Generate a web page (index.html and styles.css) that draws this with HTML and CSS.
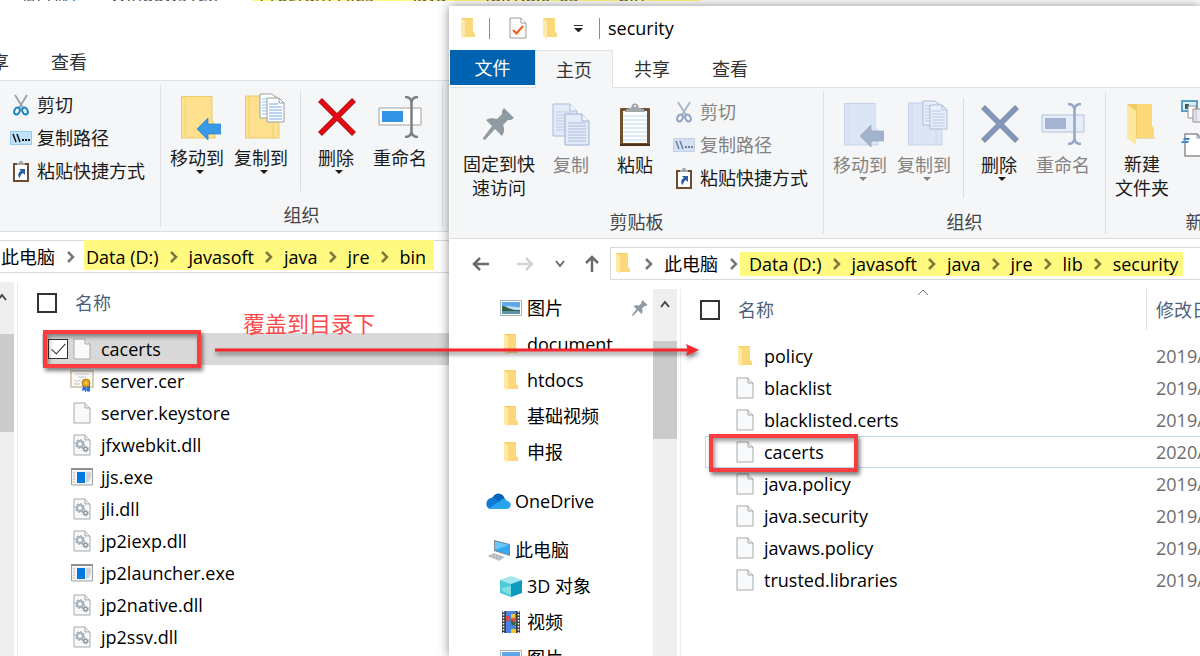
FILE: index.html
```html
<!DOCTYPE html>
<html lang="zh-CN">

<head>
    <meta charset="UTF-8">
    <meta name="viewport" content="width=device-width, initial-scale=1.0">
    <title>security</title>
    <link rel="stylesheet" href="styles.css">
</head>

<body>
    <!-- icon set -->
    <svg class="sprite" aria-hidden="true">
        <symbol id="folder" viewBox="0 0 16 21">
            <path d="M1 0H13V14L15 16V19H5L1 18Z" fill="#f5cf68" />
            <path d="M5 1H13V14L15 16V19H5Z" fill="#f9d97c" />
            <path d="M1 0L5 3V21L1 18Z" fill="#ffe9a8" />
        </symbol>
        <symbol id="folder-big" viewBox="0 0 30 42">
            <path d="M0 1H25V23L27 26V35H8L0 32Z" fill="#f3cb62" />
            <path d="M10 1H25V23L27 26V35H10Z" fill="#fbd978" />
            <path d="M0 1L9 8V42L0 35Z" fill="#ffe79d" />
            <path d="M27 35H30L27 36H9V35Z" fill="#e6dcc0" />
        </symbol>
        <symbol id="page" viewBox="0 0 18 22">
            <path d="M1 1H12L17 6V21H1Z" fill="#f8f9fa" stroke="#a5a9ab" />
            <path d="M12 1V6H17" fill="#e9ecee" stroke="#a5a9ab" />
        </symbol>
        <symbol id="dll" viewBox="0 0 18 22">
            <path d="M1 1H12L17 6V21H1Z" fill="#f8f9fa" stroke="#a5a9ab" />
            <path d="M12 1V6H17" fill="#e9ecee" stroke="#a5a9ab" />
            <circle cx="7" cy="10" r="3" fill="none" stroke="#a3b1bc" stroke-width="2" />
            <circle cx="7" cy="10" r="4" fill="none" stroke="#a3b1bc" stroke-width="2" stroke-dasharray="1.6 1.5" />
            <circle cx="12.500" cy="15" r="1.800" fill="none" stroke="#8e9ca8" stroke-width="1.500" />
            <circle cx="12.500" cy="15" r="2.800" fill="none" stroke="#8e9ca8" stroke-width="1" stroke-dasharray="1.200 1" />
        </symbol>
        <symbol id="exe" viewBox="0 0 22 18">
            <path d="M0.500 0.500H21.500V17H0.500Z" fill="#f3f4f5" stroke="#9da1a4" />
            <path d="M0 1H22" stroke="#8d9194" stroke-width="2" />
            <path d="M6 4H14V15H6Z" fill="#0078dc" />
            <path d="M2 5H4M2 8H4M2 11H4M2 14H4M15 5H20M15 7H20M15 9H20M15 11H19M15 13H18" stroke="#afb4b8" />
        </symbol>
        <symbol id="cert" viewBox="0 0 24 22">
            <path d="M1 1H23V17H1Z" fill="#fbfaf5" stroke="#d7cdb9" stroke-width="2" />
            <path d="M5 4H19M8 7H16" stroke="#bfccd9" />
            <path d="M4 11C6 9 6 13 8 11S10 12 11 11M4 14H10" fill="none" stroke="#b7bbc0" />
            <path d="M13 15L12 21L15 20V22H16V15ZM17 15L16 20L18 22L20 21V15Z" fill="#2a6fe0" />
            <circle cx="16" cy="13" r="4" fill="#e0a11c" stroke="#b97c0c" />
            <circle cx="16" cy="13" r="1.500" fill="#f7d56c" />
        </symbol>
        <symbol id="task" viewBox="0 0 18 22">
            <path d="M1 1H12L17 6V21H1Z" fill="#fafbfc" stroke="#9b9b9b" />
            <path d="M12 1V6H17" fill="#fff" stroke="#9b9b9b" />
            <path d="M4 13L7.500 16.500L14 9" fill="none" stroke="#f4591c" stroke-width="2" />
        </symbol>
        <symbol id="pin" viewBox="0 0 32 32">
            <path d="M21 0L31 10L28 12L25 12L20 17C22 21 21 25 19 28L12 21L2 32L0 31L0 30L9 18L3 12C6 10 10 10 14 11L19 6V3Z" fill="#8f9ba2" />
        </symbol>
        <symbol id="copy" viewBox="0 0 38 43">
            <path d="M1 1H18L25 8V33H1Z" fill="#e3ebf8" stroke="#a9bbd9" />
            <path d="M18 1V8H25" fill="#f4f7fc" stroke="#a9bbd9" />
            <path d="M4 9H21M4 12H21M4 15H21M4 18H21M4 21H21M4 24H21M4 27H21" stroke="#bccbe4" />
            <path d="M13 11H30L37 18V42H13Z" fill="#e3ebf8" stroke="#9db1d3" />
            <path d="M30 11V18H37" fill="#f4f7fc" stroke="#9db1d3" />
            <path d="M16 20H34M16 23H34M16 26H34M16 29H34M16 32H34M16 35H34M16 38H34" stroke="#a9bbd9" />
        </symbol>
        <symbol id="paste" viewBox="0 0 32 44">
            <rect x="1" y="5" width="30" height="38" rx="1" fill="#744d2a" />
            <path d="M1 42H31" stroke="#4b2f18" stroke-width="2" />
            <path d="M4 8H28V40H4Z" fill="#fbfdfe" />
            <path d="M4 13H28M4 17H28M4 21H28M4 25H28M4 29H28M4 33H28M4 37H28" stroke="#bfdced" />
            <path d="M6 9C6 6 9 5 12 5L13 2C14 0 18 0 19 2L20 5C23 5 26 6 26 9Z" fill="#a4a6a7" />
            <circle cx="16" cy="3" r="1" fill="#fff" />
        </symbol>
        <symbol id="cut" viewBox="0 0 16 22">
            <path d="M2 1L10 14M14 1L6 14" fill="none" stroke="var(--blade, #9aa0a5)" stroke-width="1.800" />
            <ellipse cx="4" cy="17" rx="2.600" ry="3.600" transform="rotate(25 4 17)" fill="none" stroke="var(--handle, #1c84c4)" stroke-width="2" />
            <ellipse cx="12" cy="17" rx="2.600" ry="3.600" transform="rotate(-25 12 17)" fill="none" stroke="var(--handle, #1c84c4)" stroke-width="2" />
        </symbol>
        <symbol id="path" viewBox="0 0 22 14">
            <path d="M0.500 0.500H21.500V13.500H0.500Z" fill="var(--path-bg, #bfe3fb)" stroke="var(--path-line, #9ac8e8)" />
            <path d="M3 3L6 11M7 3L10 11" stroke="var(--path-ink, #111)" stroke-width="1.500" />
            <path d="M12 9H14M15 9H17M18 9H20" stroke="var(--path-ink, #111)" stroke-width="2" />
        </symbol>
        <symbol id="shortcut" viewBox="0 0 16 22">
            <path d="M1 4H15V21H1Z" fill="#fff" stroke="#6d4c33" stroke-width="2" />
            <path d="M4 5V3H6C6 0 10 0 10 3H12V5Z" fill="#a5a8ab" />
            <path d="M6 9H12V15L10 13C8 14 7 16 7 18C4 16 5 12 8 11Z" fill="#2b5c9f" />
        </symbol>
        <symbol id="move-to" viewBox="0 0 40 44">
            <path d="M0.500 0.500H31V25L34 28V42H0.500Z" fill="var(--fold, #fde18e)" stroke="var(--fold-line, #ecc869)" />
            <path d="M4 1V42" stroke="var(--fold-line, #ecc869)" opacity="0.500" />
            <path d="M16 33L27 22V28H40V38H27V44Z" fill="var(--arrow, #3a98e8)" stroke="var(--arrow-line, #2c80c9)" stroke-width="0.700" />
        </symbol>
        <symbol id="copy-to" viewBox="0 0 40 46">
            <path d="M0.500 3H31V27L34 31V45H0.500Z" fill="var(--fold, #fde18e)" stroke="var(--fold-line, #ecc869)" />
            <path d="M28 28V45M4 3V45" stroke="var(--fold-line, #ecc869)" opacity="0.700" />
            <path d="M15 1H27L32 6V25H15Z" fill="var(--sheet, #fff)" stroke="var(--sheet-line, #9a9fa5)" />
            <path d="M17 6H28M17 9H28M17 12H28M17 15H28M17 18H28M17 21H28" stroke="var(--rule, #93bdf0)" />
            <path d="M22 5H34L39 10V29H22Z" fill="var(--sheet, #fff)" stroke="var(--sheet-line, #9a9fa5)" />
            <path d="M34 5V10H39" fill="none" stroke="var(--sheet-line, #9a9fa5)" />
            <path d="M24 11H33M24 14H37M24 17H37M24 20H37M24 23H37M24 26H37" stroke="var(--rule, #74a9ee)" />
        </symbol>
        <symbol id="delete" viewBox="0 0 38 38">
            <path d="M2 2L36 36M36 2L2 36" stroke="var(--x-line, #a80d14)" stroke-width="5.500" />
            <path d="M2.600 2.600L35.400 35.400M35.400 2.600L2.600 35.400" stroke="var(--x, #e60a14)" stroke-width="4" />
        </symbol>
        <symbol id="rename" viewBox="0 0 44 42">
            <path d="M1 12H43V29H1Z" fill="var(--box, #fff)" stroke="var(--box-line, #9da1a5)" />
            <path d="M4 15H25V26H4Z" fill="var(--fill, #3394e6)" />
            <path d="M27 1C31 1 33 3 33.500 6C34 3 36 1 40 1M33.500 6V36M27 41C31 41 33 39 33.500 36C34 39 36 41 40 41" fill="none" stroke="var(--beam, #7b7f83)" stroke-width="2.500" />
        </symbol>
        <symbol id="new-item" viewBox="0 0 26 24">
            <path d="M1 1H16V11H1Z" fill="#d7effa" stroke="#5aa0c8" stroke-width="2" />
            <path d="M4 4H8V9H4Z" fill="#355f51" />
            <path d="M7 6H15V18H7Z" fill="#fff" stroke="#8c8f92" />
            <path d="M12 9H25V22H12Z" fill="#e3f0fb" stroke="#8c8f92" />
            <path d="M15 9V22" stroke="#e8a0a0" />
        </symbol>
        <symbol id="easy-access" viewBox="0 0 22 24">
            <path d="M4 1H16L20 5V23H4Z" fill="#fff" stroke="#8c8f92" stroke-width="1.500" />
            <path d="M16 1V5H20" fill="none" stroke="#8c8f92" />
            <path d="M3 5H9L8 7H2ZM1 8H8L7 10H0Z" fill="#3f8ec9" />
        </symbol>
        <symbol id="picture" viewBox="0 0 22 16">
            <path d="M0.500 0.500H21.500V15.500H0.500Z" fill="#fff" stroke="#a8b1ba" />
            <path d="M2 2H20V9H2Z" fill="#5fa9ea" />
            <path d="M2 7C8 5 14 8 20 7V11H2Z" fill="#c4e2f5" />
            <path d="M2 6C6 6 9 9 15 10H20V11H2Z" fill="#355f4b" />
            <path d="M2 11H20V14H2Z" fill="#5d93a8" />
        </symbol>
        <symbol id="onedrive" viewBox="0 0 25 16">
            <path d="M7 4C9 0 15 -1 18 4L19 6L12 10L3 7Z" fill="#0a64bb" />
            <path d="M5 5C9 4 11 7 14 9L4 16C-1 15 -1 6 5 5Z" fill="#0f79d4" />
            <path d="M14 8C16 5 20 5 21 8C27 9 25 16 21 16H4L3 15Z" fill="#28a4ec" />
        </symbol>
        <symbol id="pc" viewBox="0 0 24 21">
            <path d="M7 0L23 4V16L7 11Z" fill="#7c8b98" />
            <path d="M8 1.500L22 5V14.500L8 10Z" fill="#35a9f3" />
            <path d="M8 1.500L22 5L8 10Z" fill="#6cc6fa" />
            <path d="M0 16L7 13L18 17L12 21Z" fill="#c8ced3" />
            <path d="M3 16L14 19.500M6 14.500L16 18" stroke="#929ba3" stroke-dasharray="2 1" />
        </symbol>
        <symbol id="cube" viewBox="0 0 22 21">
            <path d="M0 4L11 0L22 4L11 8Z" fill="#a2e7ee" />
            <path d="M0 4L11 8V21L0 17Z" fill="#4ecbd8" />
            <path d="M22 4L11 8V21L22 17Z" fill="#0c9bc0" />
            <path d="M2 12L11 10V19L2 15Z" fill="#b4f0f3" opacity="0.500" />
        </symbol>
        <symbol id="video" viewBox="0 0 18 22">
            <path d="M0 0H18V22H0Z" fill="#3e3f45" />
            <path d="M4 0H14V22H4Z" fill="#4b84df" />
            <path d="M1.500 0V22M16.500 0V22" stroke="#fff" stroke-width="1.500" stroke-dasharray="1.500 1.500" />
            <path d="M4 5H8V10H4ZM10 7H13V12H10Z" fill="#d84d4c" />
            <path d="M9 3H13V7H9ZM9 18H14V22H9Z" fill="#f2c528" />
            <path d="M8 9L13 11V14H10Z" fill="#35663d" />
        </symbol>
        <symbol id="chevron" viewBox="0 0 8 12">
            <path d="M1 1L6 6L1 11" fill="none" stroke="currentColor" stroke-width="2.500" />
        </symbol>
        <symbol id="caret-up" viewBox="0 0 10 8">
            <path d="M1 7L5 2L9 7" fill="none" stroke="currentColor" stroke-width="2" />
        </symbol>
        <symbol id="sort-up" viewBox="0 0 12 7">
            <path d="M1 6L6 1L11 6" fill="none" stroke="currentColor" />
        </symbol>
        <symbol id="arrow-left" viewBox="0 0 18 14">
            <path d="M8 1L2 7L8 13M2 7H17" fill="none" stroke="currentColor" stroke-width="2.500" />
        </symbol>
    </svg>

    <main class="desktop">
        <!-- source window -->
        <section class="window window-back">
            <header class="titlebar"></header>
            <nav class="tabs">
                <button class="tab">共享</button>
                <button class="tab">查看</button>
            </nav>
            <div class="ribbon">
                <div class="group group-clipboard">
                    <div class="tools">
                        <div class="small-list">
                            <button class="small"><svg class="i-cut"><use href="#cut" /></svg>剪切</button>
                            <button class="small"><svg class="i-path"><use href="#path" /></svg>复制路径</button>
                            <button class="small"><svg class="i-cut"><use href="#shortcut" /></svg>粘贴快捷方式</button>
                        </div>
                    </div>
                    <div class="group-name">剪贴板</div>
                </div>
                <div class="group group-organize">
                    <div class="tools">
                        <button class="big drop"><span class="pic"><svg class="i-move"><use href="#move-to" /></svg></span>移动到</button>
                        <button class="big drop"><span class="pic"><svg class="i-copyto"><use href="#copy-to" /></svg></span>复制到</button>
                        <span class="divider"></span>
                        <button class="big drop"><span class="pic"><svg class="i-delete"><use href="#delete" /></svg></span>删除</button>
                        <button class="big"><span class="pic"><svg class="i-rename"><use href="#rename" /></svg></span>重命名</button>
                    </div>
                    <div class="group-name">组织</div>
                </div>
            </div>
            <div class="addressbar">
                <div class="address">
                    <svg class="i-folder"><use href="#folder" /></svg>
                    <svg class="sep"><use href="#chevron" /></svg>
                    <a href="#">此电脑</a>
                    <svg class="sep"><use href="#chevron" /></svg>
                    <span class="marked">
                        <a href="#">Data (D:)</a>
                        <svg class="sep"><use href="#chevron" /></svg>
                        <a href="#">javasoft</a>
                        <svg class="sep"><use href="#chevron" /></svg>
                        <a href="#">java</a>
                        <svg class="sep"><use href="#chevron" /></svg>
                        <a href="#">jre</a>
                        <svg class="sep"><use href="#chevron" /></svg>
                        <a href="#">bin</a>
                    </span>
                </div>
            </div>
            <div class="content">
                <aside class="tree"></aside>
                <div class="scrollbar"><svg class="i-caret"><use href="#caret-up" /></svg><div class="thumb"></div></div>
                <div class="files">
                    <table>
                        <colgroup><col class="col-check"><col class="col-name"><col class="col-date"></colgroup>
                        <thead>
                            <tr>
                                <th colspan="2"><label class="head"><input type="checkbox">名称</label></th>
                                <th></th>
                            </tr>
                        </thead>
                        <tbody>
                            <tr class="selected">
                                <td><input type="checkbox" aria-label="cacerts" checked></td>
                                <td><span class="file"><svg class="i-page"><use href="#page" /></svg>cacerts</span></td>
                                <td></td>
                            </tr>
                            <tr><td></td><td><span class="file"><svg class="i-cert"><use href="#cert" /></svg>server.cer</span></td><td></td></tr>
                            <tr><td></td><td><span class="file"><svg class="i-page"><use href="#page" /></svg>server.keystore</span></td><td></td></tr>
                            <tr><td></td><td><span class="file"><svg class="i-page"><use href="#dll" /></svg>jfxwebkit.dll</span></td><td></td></tr>
                            <tr><td></td><td><span class="file"><svg class="i-exe"><use href="#exe" /></svg>jjs.exe</span></td><td></td></tr>
                            <tr><td></td><td><span class="file"><svg class="i-page"><use href="#dll" /></svg>jli.dll</span></td><td></td></tr>
                            <tr><td></td><td><span class="file"><svg class="i-page"><use href="#dll" /></svg>jp2iexp.dll</span></td><td></td></tr>
                            <tr><td></td><td><span class="file"><svg class="i-exe"><use href="#exe" /></svg>jp2launcher.exe</span></td><td></td></tr>
                            <tr><td></td><td><span class="file"><svg class="i-page"><use href="#dll" /></svg>jp2native.dll</span></td><td></td></tr>
                            <tr><td></td><td><span class="file"><svg class="i-page"><use href="#dll" /></svg>jp2ssv.dll</span></td><td></td></tr>
                        </tbody>
                    </table>
                </div>
            </div>
        </section>

        <!-- bottom edge of the window above -->
        <div class="sliver">
            <div class="sliver-text">
                <span>此电脑</span>
                <span>Windows (C:)</span>
                <span class="sliver-marked"><span>Program Files</span><span>Java</span><span>jdk1.8.0_65</span><span>bin</span></span>
            </div>
        </div>

        <!-- target window -->
        <section class="window window-front">
            <header class="titlebar">
                <svg class="i-folder"><use href="#folder" /></svg>
                <span class="bar"></span>
                <svg class="i-page"><use href="#task" /></svg>
                <svg class="i-folder"><use href="#folder" /></svg>
                <span class="quick-more"></span>
                <span class="bar"></span>
                <h1>security</h1>
            </header>
            <nav class="tabs">
                <button class="tab tab-file">文件</button>
                <button class="tab tab-active">主页</button>
                <button class="tab">共享</button>
                <button class="tab">查看</button>
            </nav>
            <div class="ribbon">
                <div class="group group-clipboard">
                    <div class="tools">
                        <button class="big wide"><span class="pic"><svg class="i-pin"><use href="#pin" /></svg></span>固定到快<br>速访问</button>
                        <button class="big" disabled><span class="pic"><svg class="i-copy"><use href="#copy" /></svg></span>复制</button>
                        <button class="big"><span class="pic"><svg class="i-paste"><use href="#paste" /></svg></span>粘贴</button>
                        <div class="small-list">
                            <button class="small muted" disabled><svg class="i-cut"><use href="#cut" /></svg>剪切</button>
                            <button class="small muted" disabled><svg class="i-path"><use href="#path" /></svg>复制路径</button>
                            <button class="small"><svg class="i-cut"><use href="#shortcut" /></svg>粘贴快捷方式</button>
                        </div>
                    </div>
                    <div class="group-name">剪贴板</div>
                </div>
                <div class="group group-organize">
                    <div class="tools">
                        <button class="big drop muted" disabled><span class="pic"><svg class="i-move"><use href="#move-to" /></svg></span>移动到</button>
                        <button class="big drop muted" disabled><span class="pic"><svg class="i-copyto"><use href="#copy-to" /></svg></span>复制到</button>
                        <span class="divider"></span>
                        <button class="big drop muted"><span class="pic"><svg class="i-delete"><use href="#delete" /></svg></span>删除</button>
                        <button class="big muted" disabled><span class="pic"><svg class="i-rename"><use href="#rename" /></svg></span>重命名</button>
                    </div>
                    <div class="group-name">组织</div>
                </div>
                <div class="group group-new">
                    <div class="tools">
                        <button class="big"><span class="pic"><svg class="i-newfolder"><use href="#folder-big" /></svg></span>新建<br>文件夹</button>
                        <div class="small-list">
                            <button class="small" aria-label="新建项目"><svg class="i-newitem"><use href="#new-item" /></svg></button>
                            <button class="small" aria-label="轻松访问"><svg class="i-easy"><use href="#easy-access" /></svg></button>
                        </div>
                    </div>
                    <div class="group-name">新建</div>
                </div>
            </div>
            <div class="addressbar">
                <button class="nav-btn" aria-label="后退"><svg class="i-arrow"><use href="#arrow-left" /></svg></button>
                <button class="nav-btn nav-off" aria-label="前进"><svg class="i-arrow flip"><use href="#arrow-left" /></svg></button>
                <button class="nav-btn nav-recent" aria-label="最近位置"><svg class="i-caret turn"><use href="#caret-up" /></svg></button>
                <button class="nav-btn nav-up" aria-label="上移"><svg class="i-arrow up"><use href="#arrow-left" /></svg></button>
                <div class="address">
                    <svg class="i-folder"><use href="#folder" /></svg>
                    <svg class="sep"><use href="#chevron" /></svg>
                    <a href="#">此电脑</a>
                    <svg class="sep"><use href="#chevron" /></svg>
                    <span class="marked">
                        <a href="#">Data (D:)</a>
                        <svg class="sep"><use href="#chevron" /></svg>
                        <a href="#">javasoft</a>
                        <svg class="sep"><use href="#chevron" /></svg>
                        <a href="#">java</a>
                        <svg class="sep"><use href="#chevron" /></svg>
                        <a href="#">jre</a>
                        <svg class="sep"><use href="#chevron" /></svg>
                        <a href="#">lib</a>
                        <svg class="sep"><use href="#chevron" /></svg>
                        <a href="#">security</a>
                    </span>
                </div>
            </div>
            <div class="content">
                <aside class="tree">
                    <ul>
                        <li><span class="slot"><svg class="i-pic"><use href="#picture" /></svg></span>图片<svg class="i-pinned"><use href="#pin" /></svg></li>
                        <li><span class="slot"><svg class="i-folder"><use href="#folder" /></svg></span>document</li>
                        <li><span class="slot"><svg class="i-folder"><use href="#folder" /></svg></span>htdocs</li>
                        <li><span class="slot"><svg class="i-folder"><use href="#folder" /></svg></span>基础视频</li>
                        <li><span class="slot"><svg class="i-folder"><use href="#folder" /></svg></span>申报</li>
                        <li class="root"><span class="slot"><svg class="i-cloud"><use href="#onedrive" /></svg></span>OneDrive</li>
                        <li class="root"><span class="slot"><svg class="i-pc"><use href="#pc" /></svg></span>此电脑</li>
                        <li><span class="slot"><svg class="i-cube"><use href="#cube" /></svg></span>3D 对象</li>
                        <li><span class="slot"><svg class="i-page"><use href="#video" /></svg></span>视频</li>
                        <li><span class="slot"><svg class="i-pic"><use href="#picture" /></svg></span>图片</li>
                    </ul>
                </aside>
                <div class="scrollbar"><svg class="i-caret"><use href="#caret-up" /></svg><div class="thumb"></div></div>
                <div class="files">
                    <table>
                        <colgroup><col class="col-check"><col class="col-name"><col class="col-date"></colgroup>
                        <thead>
                            <tr>
                                <th colspan="2"><svg class="sort"><use href="#sort-up" /></svg><label class="head"><input type="checkbox">名称</label></th>
                                <th class="date-head">修改日期</th>
                            </tr>
                        </thead>
                        <tbody>
                            <tr><td></td><td><span class="file"><svg class="i-folder"><use href="#folder" /></svg>policy</span></td><td>2019/</td></tr>
                            <tr><td></td><td><span class="file"><svg class="i-page"><use href="#page" /></svg>blacklist</span></td><td>2019/</td></tr>
                            <tr><td></td><td><span class="file"><svg class="i-page"><use href="#page" /></svg>blacklisted.certs</span></td><td>2019/</td></tr>
                            <tr class="focused"><td></td><td><span class="file"><svg class="i-page"><use href="#page" /></svg>cacerts</span></td><td>2020/</td></tr>
                            <tr><td></td><td><span class="file"><svg class="i-page"><use href="#page" /></svg>java.policy</span></td><td>2019/</td></tr>
                            <tr><td></td><td><span class="file"><svg class="i-page"><use href="#page" /></svg>java.security</span></td><td>2019/</td></tr>
                            <tr><td></td><td><span class="file"><svg class="i-page"><use href="#page" /></svg>javaws.policy</span></td><td>2019/</td></tr>
                            <tr><td></td><td><span class="file"><svg class="i-page"><use href="#page" /></svg>trusted.libraries</span></td><td>2019/</td></tr>
                        </tbody>
                    </table>
                </div>
            </div>
        </section>

        <!-- notes drawn over both windows -->
        <div class="mark mark-source"></div>
        <div class="mark mark-target"></div>
        <p class="note">覆盖到目录下</p>
        <svg class="note-arrow" viewBox="0 0 484 14">
            <path d="M0 7H474" stroke="#f5262c" stroke-width="3" />
            <path d="M471 1L484 7L471 13L473 7Z" fill="#f5262c" />
        </svg>
    </main>
</body>

</html>
```

FILE: styles.css
```css
* {
    box-sizing: border-box;
}

body {
    margin: 0;
    font-family: "Open Sans", "Noto Sans CJK SC", sans-serif;
    font-size: 18px;
    line-height: 24px;
    color: #1a1a1a;
}

button {
    font: inherit;
    color: inherit;
    background: none;
    border: none;
    padding: 0;
    white-space: nowrap;
}

button:disabled {
    color: #838383;
}

svg {
    display: block;
    flex: none;
}

.sprite {
    position: absolute;
    width: 0;
    height: 0;
}

.desktop {
    position: relative;
    height: 100vh;
    overflow: hidden;
    background: #fff;
}

/* windows */

.window {
    position: absolute;
    right: 0;
    bottom: 0;
    display: flex;
    flex-direction: column;
    background: #fff;
    overflow: hidden;
}

.window-back {
    left: -213px;
    top: -1px;
}

.window-front {
    left: 449px;
    top: 6px;
    padding-left: 1px;
    box-shadow: 0 0 10px rgba(0, 0, 0, 0.45);
}

.window-back > * {
    flex-shrink: 0;
}

.titlebar {
    display: flex;
    align-items: center;
    flex: none;
    height: 44px;
    padding-left: 10px;
}

.titlebar h1 {
    margin: 0 0 0 8px;
    font-size: 18px;
    font-weight: normal;
    color: #000;
}

.bar {
    width: 1px;
    height: 21px;
    margin: 0 0 0 13px;
    background: #8a8a8a;
}

.titlebar .i-page {
    margin: 0 15px 0 19px;
}

.quick-more {
    width: 9px;
    margin: 0 3px 0 16px;
    border-top: 1px solid #333;
    padding-top: 2px;
}

.quick-more::after {
    content: "";
    display: block;
    border: 4px solid transparent;
    border-top-color: #222;
    border-bottom: none;
}

/* tabs */

.tabs {
    display: flex;
    flex: none;
    height: 37px;
}

.window-back .tabs {
    padding-left: 165px;
}

.tab {
    padding: 0 21px;
    color: #333;
}

.tab-file {
    width: 85px;
    height: 35px;
    background: #0063b1;
    color: #fff;
}

.tab-active {
    position: relative;
    z-index: 1;
    height: 38px;
    padding: 0 20px;
    background: #f5f6f7;
    border: 1px solid #e0e1e2;
    border-bottom: none;
}

/* ribbon */

.ribbon {
    display: flex;
    flex: none;
    height: 152px;
    padding: 4px 0;
    background: #f5f6f7;
    border-top: 1px solid #e0e1e2;
    border-bottom: 1px solid #dcdddf;
}

.group {
    display: flex;
    flex-direction: column;
    flex: none;
    border-right: 1px solid #dfe0e2;
}

.group-clipboard {
    width: 374px;
}

.group-organize {
    width: 282px;
}

.group-new {
    width: 196px;
}

.tools {
    display: flex;
    flex: 1;
    padding: 4px 0 0 4px;
}

.group-clipboard .tools {
    padding-left: 9px;
}

.group-name {
    height: 26px;
    margin-bottom: -2px;
    text-align: center;
    color: #444;
}

.big {
    display: flex;
    flex-direction: column;
    align-items: center;
    position: relative;
    width: 64px;
    height: 104px;
}

.wide {
    width: 80px;
}

.pic {
    display: flex;
    align-items: center;
    justify-content: center;
    height: 57px;
}

.drop::after {
    content: "";
    margin-left: 6px;
    border: 4px solid transparent;
    border-top-color: currentColor;
    border-bottom: none;
}

.small-list {
    margin: -1px 0 0 auto;
    padding-right: 15px;
}

.group-new .small-list {
    margin-left: 7px;
}

.small {
    display: flex;
    align-items: center;
    height: 33px;
}

.small svg {
    margin-right: 8px;
}

.small .i-path {
    margin: 0 5px 0 -3px;
}

.divider {
    width: 1px;
    height: 100px;
    margin: 2px 3px 0 7px;
    background: #dcdde0;
}

.muted {
    --blade: #a9b4c8;
    --handle: #8ea3c4;
    --path-bg: #d5e0f2;
    --path-line: #c3d1e8;
    --path-ink: #6d7fa3;
    --fold: #dbe5f5;
    --fold-line: #c5d3ea;
    --arrow: #a3b2cd;
    --arrow-line: #94a5c3;
    --sheet: #eaf0fa;
    --sheet-line: #a9bad7;
    --rule: #b5c4de;
    --x: #8497b9;
    --x-line: #7a8db0;
    --box: #e6eefb;
    --box-line: #b1c2dd;
    --fill: #a3b3d0;
    --beam: #95a7c7;
}

/* icon sizes */

.i-folder {
    width: 16px;
    height: 21px;
}

.i-page {
    width: 18px;
    height: 22px;
}

.i-exe {
    width: 22px;
    height: 18px;
}

.i-cert {
    width: 24px;
    height: 22px;
}

.i-pin {
    width: 32px;
    height: 32px;
}

.i-copy {
    width: 38px;
    height: 43px;
}

.i-paste {
    width: 32px;
    height: 44px;
}

.i-cut {
    width: 16px;
    height: 22px;
}

.i-path {
    width: 22px;
    height: 14px;
}

.i-move {
    width: 40px;
    height: 44px;
    margin-left: 8px;
}

.i-copyto {
    width: 40px;
    height: 46px;
    margin: 0 0 4px 8px;
}

.i-delete {
    width: 38px;
    height: 38px;
    margin: 0 0 2px 2px;
}

.i-rename {
    width: 44px;
    height: 42px;
    margin-bottom: 2px;
}

.i-newfolder {
    width: 30px;
    height: 42px;
}

.i-newitem {
    width: 26px;
    height: 24px;
}

.i-easy {
    width: 22px;
    height: 24px;
}

.i-pic {
    width: 22px;
    height: 16px;
}

.i-cloud {
    width: 25px;
    height: 16px;
}

.i-pc {
    width: 24px;
    height: 21px;
}

.i-cube {
    width: 22px;
    height: 21px;
}

.i-arrow {
    width: 18px;
    height: 14px;
}

.i-caret {
    width: 10px;
    height: 8px;
}

.i-pinned {
    width: 16px;
    height: 16px;
    margin-left: auto;
}

.flip,
.turn {
    transform: rotate(180deg);
}

.up {
    transform: rotate(90deg);
}

/* address bar */

.addressbar {
    display: flex;
    flex: none;
    height: 50px;
    padding: 8px 0 9px 9px;
}

.window-back .addressbar {
    padding-left: 160px;
}

.nav-btn {
    display: flex;
    align-items: center;
    justify-content: center;
    width: 44px;
    color: #6b6b6b;
}

.nav-off {
    color: #d3d3d3;
}

.nav-recent {
    width: 26px;
}

.nav-up {
    width: 37px;
}

.address {
    display: flex;
    align-items: center;
    flex: 1;
    margin-right: -1px;
    padding-left: 4px;
    border: 1px solid #d9d9d9;
    white-space: nowrap;
    color: #000;
}

.address .i-folder {
    margin-right: 2px;
}

.address a {
    color: inherit;
    text-decoration: none;
}

.sep {
    width: 8px;
    height: 12px;
    margin: 0 11px 0 12px;
    color: #777;
}

.marked {
    display: flex;
    align-items: center;
    margin-left: -9px;
    padding: 0 5px 0 9px;
    background: #fff97f;
}

.marked .sep {
    margin-left: 11px;
    color: #7c7940;
}

.window-back .marked {
    height: 30px;
    margin: 0 0 4px -2px;
    padding: 5px 8px 0 2px;
}

/* folder tree */

.content {
    display: flex;
    flex: 1;
    min-height: 0;
}

.tree {
    flex: none;
    width: 203px;
    overflow: hidden;
    color: #000;
}

.tree ul {
    list-style: none;
    margin: 0;
    padding: 1px 5px 0 48px;
}

.tree li {
    display: flex;
    align-items: center;
    height: 36px;
    white-space: nowrap;
}

.tree .root {
    margin: 13px 0 0 -12px;
}

.slot {
    display: flex;
    justify-content: center;
    width: 25px;
    margin-right: 4px;
}

.scrollbar {
    display: flex;
    flex-direction: column;
    align-items: center;
    flex: none;
    width: 24px;
    padding-top: 11px;
    background: #efefef;
    color: #444;
}

.thumb {
    width: 24px;
    height: 98px;
    margin-top: 33px;
    background: #cbcbcb;
}

/* file list */

.files {
    flex: 1;
    min-width: 0;
    margin-left: 3px;
    padding-left: 24px;
    border-left: 1px solid #ededed;
    overflow: hidden;
}

table {
    table-layout: fixed;
    width: 641px;
    border-collapse: separate;
    border-spacing: 0;
    white-space: nowrap;
}

.col-check {
    width: 27px;
}

.col-name {
    width: 414px;
}

.col-date {
    width: 200px;
}

th {
    position: relative;
    height: 41px;
    padding: 0;
    font-weight: normal;
    text-align: left;
    color: #4b5f7c;
}

.head {
    display: flex;
    align-items: center;
    gap: 18px;
    margin-left: -5px;
}

.date-head {
    padding-left: 9px;
    border-left: 1px solid #e2e2e2;
}

.sort {
    position: absolute;
    top: 0;
    left: calc(50% - 9px);
    width: 12px;
    height: 7px;
    color: #777;
}

tbody::before {
    content: "";
    display: table-row;
    height: 10px;
}

td {
    height: 32px;
    padding: 0;
    color: #6d6d6d;
}

td:nth-child(3) {
    padding-left: 10px;
}

.file {
    display: flex;
    align-items: center;
    color: #000;
}

.file svg {
    width: 24px;
    margin: 0 7px 0 1px;
}

.selected td {
    background: #d9d9d9;
}

.focused td {
    border: 1px solid #b9dcf3;
    border-width: 1px 0;
}

.focused td:first-child {
    border-left-width: 1px;
}

input[type="checkbox"] {
    appearance: none;
    display: block;
    position: relative;
    width: 20px;
    height: 20px;
    margin: 0;
    background: #fff;
    border: 2px solid #333;
}

td input[type="checkbox"] {
    margin-left: 6px;
    border-width: 1px;
}

input[type="checkbox"]:checked::after {
    content: "";
    position: absolute;
    left: 6px;
    top: 0;
    width: 6px;
    height: 13px;
    border: solid #333;
    border-width: 0 1px 1px 0;
    transform: rotate(42deg);
}

/* strip left of the window above */

.sliver {
    position: absolute;
    top: 0;
    left: 22px;
    height: 1px;
    overflow: hidden;
}

.sliver-text {
    display: flex;
    margin-top: -17px;
    white-space: nowrap;
    color: #555;
}

.sliver-text > span {
    margin-right: 34px;
}

.sliver-marked {
    display: flex;
    gap: 39px;
    padding: 0 57px 0 7px;
    background: #fff97f;
}

/* notes */

.mark {
    position: absolute;
    border: 4px solid #fa3d40;
    box-shadow: 2px 3px 4px rgba(0, 0, 0, 0.5), inset 2px 3px 4px rgba(0, 0, 0, 0.4);
}

.mark-source {
    left: 43px;
    top: 330px;
    width: 158px;
    height: 38px;
}

.mark-target {
    left: 709px;
    top: 434px;
    width: 149px;
    height: 38px;
}

.note {
    position: absolute;
    left: 243px;
    top: 311px;
    margin: 0;
    font-size: 22px;
    color: #fb4b4d;
}

.note-arrow {
    position: absolute;
    left: 215px;
    top: 343px;
    width: 484px;
    height: 14px;
    overflow: visible;
    filter: drop-shadow(1px 3px 2px rgba(0, 0, 0, 0.5));
}
```
